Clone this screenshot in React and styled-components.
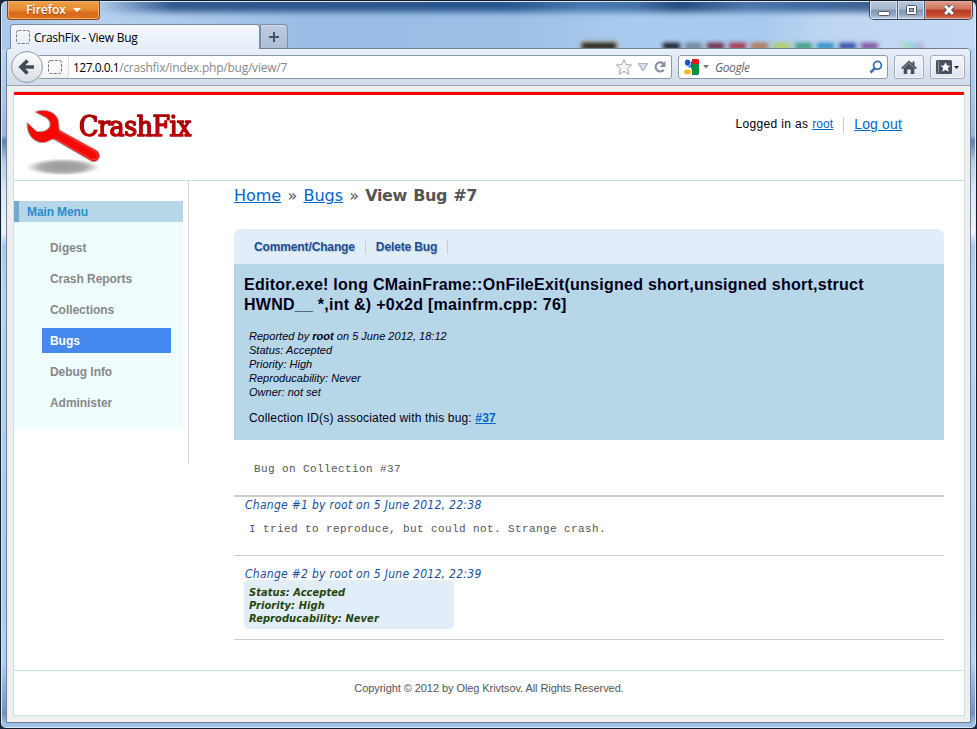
import React from "react";
import styled, { createGlobalStyle } from "styled-components";

const Global = createGlobalStyle`
  html, body { margin: 0; padding: 0; background: #1c2a44; overflow: hidden; }
  * { box-sizing: border-box; }
`;

const ARIAL = '"Liberation Sans", Arial, sans-serif';
const VERDANA = '"DejaVu Sans", Verdana, sans-serif';
const TAHOMA = '"DejaVu Sans Condensed", "DejaVu Sans", Tahoma, sans-serif';
const SEGOE = '"Open Sans", "Segoe UI", sans-serif';
const COURIER = '"Liberation Mono", "Courier New", monospace';

/* Window frame */

const Frame = styled.div`
  width: 977px;
  height: 729px;
  display: flex;
  flex-direction: column;
  padding: 0 5px 5px;
  border: 1px solid #171c2b;
  border-radius: 7px 7px 6px 6px;
  box-shadow: inset 0 0 0 1px #d5ebfb;
  background:
    linear-gradient(90deg, #a9c8ea 0%, #b8d2ef 9%, #9abde5 32%, #9dc0e7 53%, #a9cbef 65%, #a8caee 78%, #bfd6f1 85%, #c3dbf4 100%) 0 0 / 100% 48px no-repeat,
    linear-gradient(180deg, #b8d5f3 48px, #a7c6e8 100px, #98b7db 134px, #5f81ae 140px, #b3cce7 160px, #d8e8f8 190px, #f0f4fa 232px, #a9c9ee 244px, #b3d3f7 290px, #a9cbf0 590px, #b0d2f7 660px, #7293c2 713px, #9fbfe4 722px);
`;

const Caption = styled.div`
  height: 23px;
  flex: none;
  display: flex;
  align-items: flex-start;
  justify-content: space-between;
  padding: 0 0 0 1px;
  margin-right: -2px;
  position: relative;
  z-index: 0;
  &::before {
    content: "";
    position: absolute;
    z-index: -1;
    top: -4px;
    left: 90px;
    right: 20px;
    height: 15px;
    background: linear-gradient(90deg, transparent, #2f578c 9%, #28548d 48%, #4978ae 57%, #4270a6 63%, #234a7c 68%, #4b75aa 76%, #3f6a9f 82%, #3b5f8f 92%, transparent);
    filter: blur(3px);
    clip-path: inset(5px -20px -12px);
  }
`;

const FirefoxButton = styled.div`
  width: 93px;
  height: 19px;
  display: flex;
  align-items: center;
  padding: 0 0 1px 18px;
  gap: 7px;
  border: 1px solid #87451a;
  border-top: 0;
  border-radius: 0 0 4px 4px;
  box-shadow: inset 0 0 0 1px #f4b06b;
  background: linear-gradient(#eba14a, #e68a2d 50%, #d9691b 65%, #dc761f);
  color: #fff;
  font: 600 12px/16px ${SEGOE};
  letter-spacing: -0.05px;
  text-shadow: 0 1px 1px #8b4214;
`;

const Controls = styled.div`
  display: flex;
  height: 19px;
  border: 1px solid #36455a;
  border-top: 0;
  border-radius: 0 0 5px 5px;
  overflow: hidden;
`;

const Control = styled.div`
  width: ${(p) => p.$w}px;
  display: grid;
  place-items: center;
  border-left: ${(p) => (p.$first ? 0 : "1px solid #4f6078")};
  box-shadow: inset 0 0 0 1px ${(p) => (p.$close ? "#e8a695" : "#d7e1ee")};
  background: ${(p) =>
    p.$close
      ? "linear-gradient(#dfa08f, #cd705a 46%, #b73925 50%, #c64e31 80%, #df806b)"
      : "linear-gradient(#b7c7da, #a7b8ce 46%, #8196b2 50%, #91a5c0 75%, #c3d2e4)"};
`;

const TabRow = styled.div`
  flex: none;
  height: 24px;
  display: flex;
  padding-left: 4px;
`;

const Tab = styled.div`
  width: 250px;
  height: 25px;
  position: relative;
  z-index: 1;
  display: flex;
  align-items: center;
  gap: 3px;
  padding: 1px 0 0 5px;
  border: 1px solid #778ba5;
  border-bottom: 0;
  border-radius: 4px 4px 0 0;
  background: linear-gradient(#f6f9fe, #e5edf8);
  color: #000;
  font: 12px/20px ${SEGOE};
  letter-spacing: -0.28px;
`;

const NewTab = styled.div`
  width: 28px;
  height: 24px;
  display: grid;
  place-items: center;
  border: 1px solid #7d90a9;
  border-bottom: 0;
  border-radius: 0 4px 0 0;
  background: linear-gradient(#bfcce1, #adbed6);
  box-shadow: inset 0 1px #d0dcef;
`;

const Backdrop = styled.div`
  flex: 1;
  display: flex;
  align-items: flex-end;
  gap: 5px;
  padding-left: 294px;
  overflow: hidden;
`;

const Blotch = styled.i`
  flex: none;
  width: ${(p) => p.$w || 17}px;
  height: 6px;
  margin-right: ${(p) => p.$after || 0}px;
  margin-bottom: -1px;
  background: ${(p) => p.$c};
  box-shadow: 0 0 0 ${(p) => (p.$halo ? "2px" : "0")} #b9b696;
  filter: blur(2px);
`;

const Client = styled.div`
  flex: 1;
  min-height: 0;
  display: flex;
  flex-direction: column;
  border: 1px solid #6d7e95;
  border-radius: 4px 4px 0 0;
  background: #efefef;
`;

const NavBar = styled.div`
  flex: none;
  height: 37px;
  display: flex;
  align-items: center;
  padding: 0 5px 0 4px;
  border-bottom: 1px solid #9aa2ad;
  border-radius: 3px 3px 0 0;
  background: linear-gradient(#e8eff9, #d0dceb);
`;

const BackButton = styled.div`
  flex: none;
  width: 32px;
  height: 32px;
  margin-right: -4px;
  position: relative;
  z-index: 1;
  display: grid;
  place-items: center;
  border: 1px solid #929ba8;
  border-radius: 50%;
  background: linear-gradient(#fdfdfe, #d9dee5);
`;

const AddressBar = styled.div`
  flex: none;
  width: 633px;
  height: 24px;
  display: flex;
  align-items: center;
  border: 1px solid #8e99a8;
  border-left: 0;
  border-radius: 0 3px 3px 0;
  background: #fff;
  color: #888;
  font: 12px/20px ${SEGOE};
`;

const Identity = styled.div`
  width: 30px;
  height: 22px;
  display: flex;
  align-items: center;
  padding-left: 9px;
  border-right: 1px solid #dedede;
  background: linear-gradient(#fff, #f2f2f2);
`;

const Url = styled.span`
  flex: 1;
  padding: 2px 0 0 4px;
  letter-spacing: -0.23px;
  b { color: #000; font-weight: 400; letter-spacing: -0.5px; }
`;

const AddressIcons = styled.span`
  display: flex;
  align-items: center;
  gap: 5px;
  padding-right: 4px;
`;

const SearchBox = styled.div`
  flex: none;
  width: 210px;
  height: 24px;
  margin-left: 6px;
  display: flex;
  align-items: center;
  padding: 0 4px;
  border: 1px solid #8e99a8;
  border-radius: 3px;
  background: #fff;
  color: #666;
  font: italic 12px/20px ${SEGOE};
  letter-spacing: -0.4px;
`;

const Placeholder = styled.span`
  flex: 1;
  padding: 2px 0 0 6px;
`;

const Chevron = styled.svg`
  margin-left: 1px;
`;

const ToolButton = styled.div`
  flex: none;
  width: ${(p) => p.$w}px;
  height: 24px;
  margin-left: 6px;
  display: flex;
  align-items: center;
  justify-content: center;
  gap: 2px;
  border: 1px solid #a2acba;
  border-radius: 3px;
  background: linear-gradient(#f4f7fb, #dfe5ee);
  box-shadow: inset 0 0 0 1px #f3f6fa;
`;

/* Web page */

const Page = styled.div`
  width: 952px;
  height: 625px;
  margin: 5px 0 0 6px;
  border: 1px solid #c9e0ed;
  background: #fff;
`;

const Header = styled.header`
  height: 89px;
  display: flex;
  justify-content: space-between;
  border-top: 3px solid #f00;
  border-bottom: 1px solid #c9e0ed;
  color: #000;
`;

const Brand = styled.div`
  display: flex;
  padding: 13px 0 0 10px;
`;

const BrandName = styled.span`
  height: 38px;
  margin-left: -27px;
  font: 28px/38px "DejaVu Serif Condensed", "DejaVu Serif", serif;
  font-stretch: condensed;
  letter-spacing: -0.4px;
  color: transparent;
  background: linear-gradient(#8b0006 20%, #b40007 55%, #e00008 80%);
  background-clip: text;
  -webkit-text-stroke: 1.1px #b40007;
`;

const Account = styled.div`
  display: flex;
  align-items: center;
  height: 17px;
  margin: 21px 62px 0 0;
  font: 12px/17px ${ARIAL};
  letter-spacing: 0.36px;
`;

const Link = styled.a`
  color: #06c;
  text-decoration: underline;
`;

const SmallLink = styled(Link)`
  letter-spacing: 0.1px;
`;

const LogOut = styled(Link)`
  height: 16px;
  margin-left: 10px;
  padding-left: 10px;
  border-left: 1px solid #ccc;
  font-size: 14px;
  line-height: 15px;
  letter-spacing: 0.15px;
`;

const Body = styled.div`
  height: 489px;
  display: flex;
`;

const Sidebar = styled.nav`
  width: 175px;
  height: 283px;
  padding: 20px 5px 0 0;
  border-right: 1px solid #d8d8d8;
  font: bold 12px/27px ${ARIAL};
  letter-spacing: -0.05px;
`;

const MenuTitle = styled.div`
  height: 21px;
  padding-left: 8px;
  border-left: 5px solid #6faccf;
  background: #b7d6e7;
  color: #298dcd;
  line-height: 22px;
  letter-spacing: -0.12px;
`;

const Menu = styled.div`
  height: 207px;
  display: flex;
  flex-direction: column;
  gap: 6px;
  padding: 13px 12px 0 28px;
  background: #effdff;
`;

const MenuItem = styled.a`
  height: 25px;
  padding-left: 8px;
  background: ${(p) => (p.$active ? "#4588ee" : "transparent")};
  color: ${(p) => (p.$active ? "#fff" : "#888")};
`;

const Content = styled.main`
  width: 710px;
  margin-left: 45px;
`;

const Crumbs = styled.div`
  height: 48px;
  padding-top: 5px;
  font: 16px/20px ${VERDANA};
  color: #555;
  word-spacing: 1.2px;
  letter-spacing: -0.02px;
  b { letter-spacing: -0.43px; }
`;

const Actions = styled.div`
  height: 35px;
  display: flex;
  align-items: center;
  padding-left: 10px;
  border-radius: 7px 7px 0 0;
  background: #e1edf9;
`;

const Action = styled.a`
  height: 15px;
  padding: 0 10px;
  border-right: 1px solid #ccc;
  color: #1a4e94;
  font: bold 12px/17px ${ARIAL};
  letter-spacing: -0.13px;
  text-shadow: 1px 1px 1px #bcc8d6;
`;

const Summary = styled.section`
  height: 176px;
  padding: 11px 10px 0;
  background: #b7d6e7;
  color: #000019;
`;

const BugTitle = styled.h1`
  margin: 0 0 14px;
  font: bold 16px/20px ${ARIAL};
  letter-spacing: 0.26px;
  white-space: nowrap;
`;

const Facts = styled.div`
  padding-left: 5px;
  font: italic 11px/14px ${ARIAL};
  letter-spacing: 0.02px;
`;

const Associated = styled.div`
  padding: 11px 0 0 5px;
  font: 12px/16px ${ARIAL};
  letter-spacing: 0.16px;
`;

const Description = styled.div`
  height: 57px;
  padding: 21px 0 0 20px;
  border-bottom: 2px solid #ccc;
  color: #555;
  font: 11px/16px ${COURIER};
  letter-spacing: 0.4px;
`;

const Change = styled.section`
  height: ${(p) => p.$h}px;
  padding: ${(p) => p.$top}px 0 0 10px;
  border-bottom: 1px solid #ccc;
`;

const ChangeHead = styled.div`
  height: 14px;
  padding-left: 1px;
  color: #1550a0;
  font: italic 12px/17px ${TAHOMA};
  letter-spacing: 0.28px;
`;

const Comment = styled.div`
  padding: 10px 0 0 5px;
  color: #555;
  font: 11px/16px ${COURIER};
  letter-spacing: 0.4px;
`;

const ChangeBox = styled.div`
  width: 210px;
  height: 49px;
  padding: 6px 5px 0;
  border-radius: 5px;
  background: #e1edf9;
  color: #264409;
  font: italic bold 11px/13px ${TAHOMA};
  letter-spacing: 0.08px;
`;

const Footer = styled.footer`
  height: 45px;
  padding-top: 9px;
  border-top: 1px solid #c9e0ed;
  color: #555;
  text-align: center;
  font: 11px/16px ${ARIAL};
  letter-spacing: -0.07px;
`;

/* Icons */

const Blank = () => (
  <svg width="15" height="15" viewBox="0 0 15 15">
    <rect x=".5" y=".5" width="13" height="13" rx="2" fill="none" stroke="#777" strokeDasharray="3 1.4" />
  </svg>
);

const Wrench = () => (
  <svg width="82" height="70" viewBox="24 108 82 70">
    <defs>
      <radialGradient id="shade">
        <stop offset="0" stopColor="#999" />
        <stop offset=".6" stopColor="#aaa" />
        <stop offset="1" stopColor="#fff" />
      </radialGradient>
    </defs>
    <ellipse cx="63" cy="167" rx="37" ry="8.5" fill="url(#shade)" />
    <path
      d="M35 112 C42 108.500 54 110 58 119 C59.500 123 58.500 127 59.500 130 L96 150 C99.500 152 100.500 156 98.500 159 C97 161.500 94 162.500 91 161 L54 139.500 C51 139 49 141.500 45 142.500 C36 144 26 136 27.200 122.500 L36 131 C41 132.500 47 131 49.500 127 C51 123 49 120 46.500 118 Z"
      fill="#fb0505" stroke="#aaa" strokeWidth="1"
    />
    <path d="M58 131 L95 151.500 C99 155 97 161 92 159.500 L55 138.500" fill="none" stroke="#ff5a5a" strokeWidth=".7" />
  </svg>
);

const Arrow = ({ w = 9, h = 5, color = "#fff", stroke = "none" }) => (
  <svg width={w} height={h} viewBox="0 0 10 6" preserveAspectRatio="none">
    <path d="M0 0H10L5 6Z" fill={color} stroke={stroke} />
  </svg>
);

const GoogleMark = () => (
  <svg width="16" height="16" viewBox="0 0 16 16">
    <path d="M8 0H14.500Q16 0 16 1.500V5H8Z" fill="#e31a12" />
    <path d="M8 5H16V14.500Q16 16 14.500 16H8Z" fill="#0d8f3f" />
    <path d="M0 1.500Q0 0 1.500 0H9V5L7 8L9 11V16H1.500Q0 16 0 14.500Z" fill="#fff" />
    <ellipse cx="4.600" cy="3.600" rx="2.700" ry="3.200" fill="#1c55c4" />
    <path d="M5.500 8 Q9.500 7.500 8.500 2.500" fill="none" stroke="#1c55c4" strokeWidth="1.500" />
    <ellipse cx="4.500" cy="13" rx="3.300" ry="2.400" fill="#f3b61b" />
  </svg>
);

export default function App() {
  return (
    <>
      <Global />
      <Frame>
        <Caption>
          <FirefoxButton>
            Firefox
            <Arrow w={8} h={4} />
          </FirefoxButton>
          <Controls>
            <Control $w={27} $first>
              <svg width="14" height="12"><rect x="1.500" y="7.500" width="11" height="4" rx="1" fill="#fff" stroke="#535666" /></svg>
            </Control>
            <Control $w={27}>
              <svg width="13" height="12"><rect x="1.500" y="1.500" width="10" height="9" rx="1" fill="#fff" stroke="#535666" /><rect x="4.500" y="4.500" width="4" height="3" fill="#9fb1c8" stroke="#535666" /></svg>
            </Control>
            <Control $w={48} $close>
              <svg width="14" height="12" viewBox="0 0 14 12"><path d="M3.200 2 L10.800 10 M10.800 2 L3.200 10" stroke="#585064" strokeWidth="4.800" /><path d="M3.200 2 L10.800 10 M10.800 2 L3.200 10" stroke="#fff" strokeWidth="2.800" /></svg>
            </Control>
          </Controls>
        </Caption>
        <TabRow>
          <Tab><Blank /><span>CrashFix - View Bug</span></Tab>
          <NewTab>
            <svg width="12" height="12"><path d="M6 1V11M1 6H11" stroke="#455466" strokeWidth="2" /></svg>
          </NewTab>
          <Backdrop>
            <Blotch $w={34} $c="#1b1a14" $after={42} $halo />
            <Blotch $c="#14161c" />
            <Blotch $c="#6d7f92" />
            <Blotch $c="#6d2238" />
            <Blotch $c="#a62b42" />
            <Blotch $c="#b4704c" />
            <Blotch $c="#b4cc5d" />
            <Blotch $c="#389c77" />
            <Blotch $c="#2389c4" />
            <Blotch $c="#2b449c" />
            <Blotch $c="#7a4c98" $after={18} />
            <Blotch $w={22} $c="linear-gradient(90deg,#b8d8b0,#8ad6d8,#c69be0)" />
          </Backdrop>
        </TabRow>
        <Client>
          <NavBar>
            <BackButton>
              <svg width="18" height="18" viewBox="0 0 18 18"><path d="M9.500 2.500 L3 9 L9.500 15.500 M3.500 9 H16" fill="none" stroke="#414c57" strokeWidth="3.600" /></svg>
            </BackButton>
            <AddressBar>
              <Identity><Blank /></Identity>
              <Url><b>127.0.0.1</b>/crashfix/index.php/bug/view/7</Url>
              <AddressIcons>
                <svg width="18" height="18" viewBox="0 0 18 18"><path d="M9 1.500 L11.200 6.500 L16.700 7 L12.600 10.700 L13.900 16.300 L9 13.400 L4.100 16.300 L5.400 10.700 L1.300 7 L6.800 6.500Z" fill="#f6f6f6" stroke="#a2a7ae" /></svg>
                <Arrow w={10} h={8} color="#d7e0ea" stroke="#a3afbd" />
                <svg width="14" height="14" viewBox="0 0 14 14"><path d="M10.800 9.800 A4.600 4.600 0 1 1 10.300 3.500" fill="none" stroke="#8793a3" strokeWidth="2.200" /><path d="M12.500 1V7H6.500Z" fill="#8793a3" /></svg>
              </AddressIcons>
            </AddressBar>
            <SearchBox>
              <GoogleMark />
              <Chevron width="9" height="4"><path d="M3 0H9L6 3.500Z" fill="#777" /></Chevron>
              <Placeholder>Google</Placeholder>
              <svg width="14" height="14" viewBox="0 0 14 14"><circle cx="8.500" cy="5.300" r="3.900" fill="none" stroke="#346fb0" strokeWidth="1.800" /><path d="M5.800 8.200 L1.500 12.600" stroke="#346fb0" strokeWidth="2.600" /></svg>
            </SearchBox>
            <ToolButton $w={30}>
              <svg width="16" height="15" viewBox="0 0 16 15"><path d="M8 0.500 L11.500 3.600 V1.500 H13.500 V5.500 L16 8 L14.800 9 H13.300 V14 H9.800 V9.500 H6.200 V14 H2.700 V9 H1.200 L0 8Z" fill="#47525e" /><path d="M1.500 8.900 L8 3 L14.500 8.900" fill="none" stroke="#a9b2bd" strokeWidth=".8" /></svg>
            </ToolButton>
            <ToolButton $w={35}>
              <svg width="16" height="14" viewBox="0 0 16 14"><rect width="16" height="14" rx="1.500" fill="#47525e" /><path d="M2.500 1V13" stroke="#8b949e" /><path d="M9.500 2.200 L11 5.500 L14.400 5.800 L11.800 8.100 L12.600 11.700 L9.500 9.800 L6.400 11.700 L7.200 8.100 L4.600 5.800 L8 5.500Z" fill="#fff" /></svg>
              <Arrow w={5} h={3} color="#222" />
            </ToolButton>
          </NavBar>
          <Page>
            <Header>
              <Brand>
                <Wrench />
                <BrandName>CrashFix</BrandName>
              </Brand>
              <Account>
                <span>Logged in as <SmallLink>root</SmallLink></span>
                <LogOut>Log out</LogOut>
              </Account>
            </Header>
            <Body>
              <Sidebar>
                <MenuTitle>Main Menu</MenuTitle>
                <Menu>
                  <MenuItem>Digest</MenuItem>
                  <MenuItem>Crash Reports</MenuItem>
                  <MenuItem>Collections</MenuItem>
                  <MenuItem $active>Bugs</MenuItem>
                  <MenuItem>Debug Info</MenuItem>
                  <MenuItem>Administer</MenuItem>
                </Menu>
              </Sidebar>
              <Content>
                <Crumbs>
                  <Link>Home</Link> » <Link>Bugs</Link> » <b>View Bug #7</b>
                </Crumbs>
                <Actions>
                  <Action>Comment/Change</Action>
                  <Action>Delete Bug</Action>
                </Actions>
                <Summary>
                  <BugTitle>
                    Editor.exe! long CMainFrame::OnFileExit(unsigned short,unsigned short,struct
                    <br />
                    HWND__ *,int &amp;) +0x2d [mainfrm.cpp: 76]
                  </BugTitle>
                  <Facts>
                    <div>Reported by <b>root</b> on 5 June 2012, 18:12</div>
                    <div>Status: Accepted</div>
                    <div>Priority: High</div>
                    <div>Reproducability: Never</div>
                    <div>Owner: not set</div>
                  </Facts>
                  <Associated>
                    Collection ID(s) associated with this bug: <b><Link>#37</Link></b>
                  </Associated>
                </Summary>
                <Description>Bug on Collection #37</Description>
                <Change $h={59} $top={0}>
                  <ChangeHead>Change #1 by root on 5 June 2012, 22:38</ChangeHead>
                  <Comment>I tried to reproduce, but could not. Strange crash.</Comment>
                </Change>
                <Change $h={84} $top={10}>
                  <ChangeHead>Change #2 by root on 5 June 2012, 22:39</ChangeHead>
                  <ChangeBox>
                    <div>Status: Accepted</div>
                    <div>Priority: High</div>
                    <div>Reproducability: Never</div>
                  </ChangeBox>
                </Change>
              </Content>
            </Body>
            <Footer>Copyright © 2012 by Oleg Krivtsov. All Rights Reserved.</Footer>
          </Page>
        </Client>
      </Frame>
    </>
  );
}
